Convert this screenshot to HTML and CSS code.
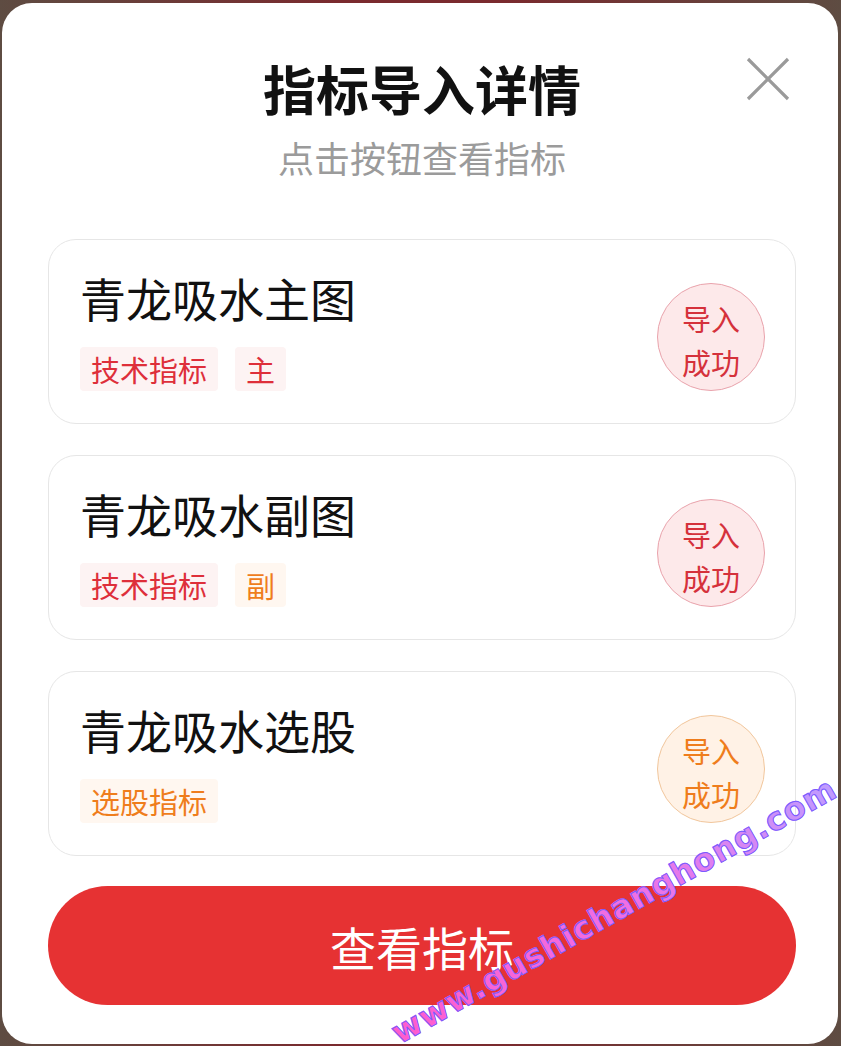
FILE: index.html
```html
<!DOCTYPE html>
<html lang="zh-CN">
<head>
  <meta charset="UTF-8">
  <meta name="viewport" content="width=device-width, initial-scale=1.0">
  <title>指标导入详情</title>
  <link rel="stylesheet" href="styles.css">
</head>
<body>
  <div class="modal">
    <span class="close-btn">
      <svg width="46" height="44" viewBox="0 0 46 44">
        <path d="M3 2 L43 42 M43 2 L3 42" stroke="#9a9a9a" stroke-width="3.2" fill="none"/>
      </svg>
    </span>

    <div class="header">
      <h1>指标导入详情</h1>
      <p class="subtitle">点击按钮查看指标</p>
    </div>

    <div class="card-list">
      <div class="card">
        <div class="card-info">
          <h2>青龙吸水主图</h2>
          <div class="tags">
            <span class="tag">技术指标</span>
            <span class="tag">主</span>
          </div>
        </div>
        <div class="badge">导入<br>成功</div>
      </div>

      <div class="card">
        <div class="card-info">
          <h2>青龙吸水副图</h2>
          <div class="tags">
            <span class="tag">技术指标</span>
            <span class="tag orange">副</span>
          </div>
        </div>
        <div class="badge">导入<br>成功</div>
      </div>

      <div class="card">
        <div class="card-info">
          <h2>青龙吸水选股</h2>
          <div class="tags">
            <span class="tag orange">选股指标</span>
          </div>
        </div>
        <div class="badge orange">导入<br>成功</div>
      </div>
    </div>

    <button class="btn">查看指标</button>
  </div>

  <div class="watermark">www.gushichanghong.com</div>
</body>
</html>
```

FILE: styles.css
```css
* {
  margin: 0;
  padding: 0;
  box-sizing: border-box;
  font-family: 'Noto Sans CJK SC', 'Noto Sans', sans-serif;
}

html, body {
  height: 100%;
  overflow: hidden;
}

body {
  position: relative;
  background: linear-gradient(90deg, #5e4c42 0%, #7a2a2e 40%, #7a2a2e 60%, #5e4c42 100%);
  padding: 3px 3px 0 2px;
}

.modal {
  position: relative;
  background: #fff;
  border-radius: 30px;
  height: 1041px;
  padding: 50px 42px 0 46px;
  overflow: hidden;
}

.close-btn {
  position: absolute;
  top: 54px;
  right: 47px;
  line-height: 0;
}

.header {
  text-align: center;
}

h1 {
  font-size: 53px;
  line-height: 70px;
  font-weight: 700;
  color: #111;
}

.subtitle {
  margin-top: 12px;
  font-size: 36px;
  line-height: 44px;
  color: #9b9b9b;
}

.card-list {
  margin-top: 60px;
  display: flex;
  flex-direction: column;
  gap: 31px;
}

.card {
  display: flex;
  justify-content: space-between;
  align-items: center;
  border: 1px solid #e6e6e6;
  border-radius: 28px;
  padding: 27px 30px 32px 31px;
}

.card h2 {
  font-size: 46px;
  line-height: 60px;
  font-weight: 400;
  color: #111;
}

.tags {
  display: flex;
  gap: 17px;
  margin-top: 20px;
}

.tag {
  font-size: 29px;
  line-height: 44px;
  padding: 0 11px;
  color: #de2f3a;
  background: #fdf3f3;
  border-radius: 4px;
}

.tag.orange {
  color: #ef7d1c;
  background: #fff7f0;
}

.badge {
  width: 108px;
  height: 108px;
  margin-top: 15px;
  border-radius: 50%;
  border: 1px solid #e9a3ac;
  background: #fde9ea;
  color: #d5313b;
  font-size: 29px;
  line-height: 44px;
  text-align: center;
  padding-top: 12px;
}

.badge.orange {
  border-color: #f1c69c;
  background: #fff2e6;
  color: #ef7d1c;
}

.btn {
  display: block;
  width: 100%;
  height: 119px;
  margin-top: 30px;
  border: none;
  border-radius: 60px;
  background: #e63233;
  color: #fff;
  font-size: 46px;
  cursor: pointer;
}

/* watermark stamped over the screenshot */
.watermark {
  position: absolute;
  left: 405px;
  top: 1010px;
  line-height: 44px;
  transform: rotate(-29.5deg);
  transform-origin: left bottom;
  font-family: 'DejaVu Sans', sans-serif;
  font-size: 32px;
  font-weight: 700;
  letter-spacing: 1px;
  white-space: nowrap;
  background: linear-gradient(90deg, #ff5ccc 0%, #f070e4 55%, #bf9cff 100%);
  -webkit-background-clip: text;
  background-clip: text;
  color: transparent;
  -webkit-text-stroke: 1px #7a5cff;
  pointer-events: none;
}
```
